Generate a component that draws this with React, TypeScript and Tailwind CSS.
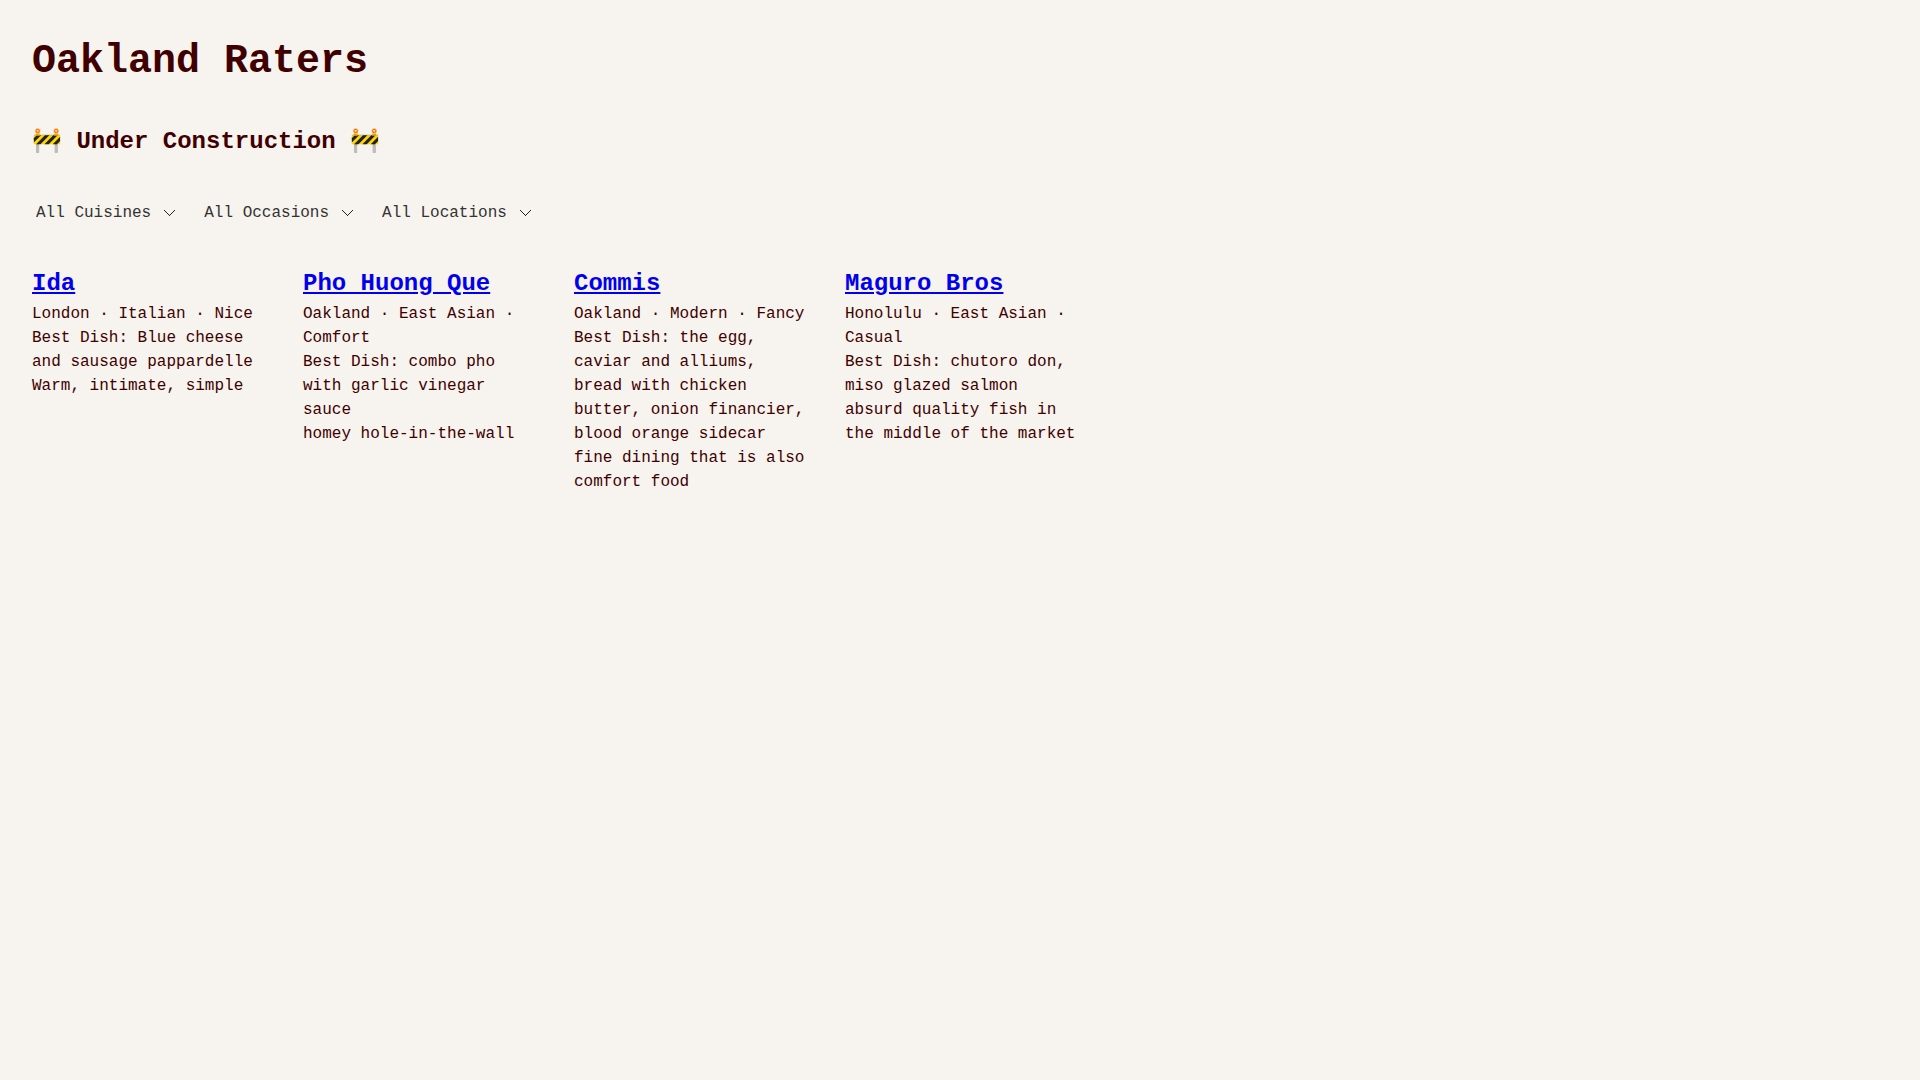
import { FC } from "react";

interface IFilter {
    id: string,
    label: string,
    options: string[],
}

interface IPlace {
    name: string,
    tags: string,
    dish: string,
    note: string,
}

const filters: IFilter[] = [
    { id: "cuisine", label: "All Cuisines", options: ["Italian", "East Asian", "Modern"] },
    { id: "occasion", label: "All Occasions", options: ["Nice", "Comfort", "Fancy", "Casual"] },
    { id: "location", label: "All Locations", options: ["London", "Oakland", "Honolulu"] },
];

const places: IPlace[] = [
    {
        name: "Ida",
        tags: "London · Italian · Nice",
        dish: "Blue cheese and sausage pappardelle",
        note: "Warm, intimate, simple",
    },
    {
        name: "Pho Huong Que",
        tags: "Oakland · East Asian · Comfort",
        dish: "combo pho with garlic vinegar sauce",
        note: "homey hole-in-the-wall",
    },
    {
        name: "Commis",
        tags: "Oakland · Modern · Fancy",
        dish: "the egg, caviar and alliums, bread with chicken butter, onion financier, blood orange sidecar",
        note: "fine dining that is also comfort food",
    },
    {
        name: "Maguro Bros",
        tags: "Honolulu · East Asian · Casual",
        dish: "chutoro don, miso glazed salmon",
        note: "absurd quality fish in the middle of the market",
    },
];

const Filter: FC<IFilter> = ({ id, label, options }) => (
    <div className="relative flex items-center">
        <select
            id={id}
            aria-label={label}
            className="field-sizing-content appearance-none bg-transparent py-2 pl-1 pr-8 leading-[26px] text-[#333333]"
        >
            <option>{label}</option>
            {options.map((option) => <option key={option}>{option}</option>)}
        </select>
        <svg
            className="pointer-events-none absolute right-2 h-[6px] w-[11px]"
            viewBox="0 0 11 6"
            fill="none"
            stroke="#222222"
            shapeRendering="crispEdges"
        >
            <path d="M0.5 0.5L5.5 5.5L10.5 0.5" />
        </svg>
    </div>
);

const Place: FC<IPlace> = ({ name, tags, dish, note }) => (
    <article className="w-[239px]">
        <h3 className="text-2xl/9 font-bold">
            <a href="#" className="text-[#0000ee] underline">{name}</a>
        </h3>
        <p>{tags}</p>
        <p>{`Best Dish: ${dish}`}</p>
        <p>{note}</p>
    </article>
);

const App: FC = () => (
    <div className="flex min-h-screen flex-col gap-8 bg-[#f7f3ee] p-8 font-['Liberation_Mono',monospace] text-base text-[#400000]">
        <h1 className="text-[40px]/[60px] font-bold">Oakland Raters</h1>
        <h2 className="text-2xl/9 font-bold">🚧 Under Construction 🚧</h2>
        <div className="flex flex-wrap gap-[17px]">
            {filters.map((filter) => <Filter key={filter.id} {...filter} />)}
        </div>
        <main className="flex flex-wrap gap-8">
            {places.map((place) => <Place key={place.name} {...place} />)}
        </main>
    </div>
);

export default App;
